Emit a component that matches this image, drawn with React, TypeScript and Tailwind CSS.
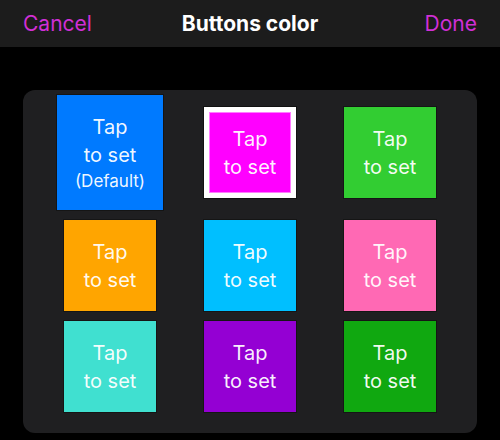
type Swatch = {
  bg: string;
  label?: string;
  big?: boolean;
  selected?: boolean;
};

const swatches: Swatch[] = [
  { bg: "bg-[#007aff]", label: "(Default)", big: true },
  { bg: "bg-[#ff00ff]", selected: true },
  { bg: "bg-[#32cd32]" },
  { bg: "bg-[#ffa500]" },
  { bg: "bg-[#00bfff]" },
  { bg: "bg-[#ff69b4]" },
  { bg: "bg-[#40e0d0]" },
  { bg: "bg-[#9400d3]" },
  { bg: "bg-[#10a810]" },
];

const TapText = ({ label }: { label?: string }) => (
  <div className="flex flex-col items-center text-center text-white/95">
    <span className="text-[20px] leading-[28px]">Tap</span>
    <span className="text-[20px] leading-[28px]">to set</span>
    {label && <span className="text-[17px] leading-[24px]">{label}</span>}
  </div>
);

const ColorTile = ({ swatch }: { swatch: Swatch }) => {
  if (swatch.selected) {
    return (
      <div className="w-[94px] h-[93px] bg-white border border-[#111] p-[5px]">
        <div className={`w-full h-full ${swatch.bg} border border-[#ff7bff] grid place-items-center`}>
          <TapText />
        </div>
      </div>
    );
  }
  return (
    <div
      className={`${swatch.bg} border border-[#151515] grid place-items-center ${
        swatch.big ? "w-[108px] h-[117px]" : "w-[94px] h-[93px]"
      }`}>
      <TapText label={swatch.label} />
    </div>
  );
};

export default function App() {
  return (
    <div className="w-[500px] h-[440px] bg-black overflow-hidden font-['Inter','Liberation_Sans',sans-serif]">
      <div className="h-[47px] bg-[#1c1c1c] flex items-center justify-between px-[23px] relative">
        <span className="text-[21px] text-[#d12fd6]">Cancel</span>
        <span className="absolute left-1/2 -translate-x-1/2 text-[21px] font-bold text-white">Buttons color</span>
        <span className="text-[21px] text-[#d12fd6]">Done</span>
      </div>
      <div className="mx-[23px] mt-[43px] bg-[#1f1f21] rounded-[12px] pt-[4px] pb-[20px] px-[17px]">
        <div className="grid grid-cols-3 gap-y-[8px] place-items-center">
          {swatches.map((s, i) => (
            <ColorTile key={i} swatch={s} />
          ))}
        </div>
      </div>
    </div>
  );
}
